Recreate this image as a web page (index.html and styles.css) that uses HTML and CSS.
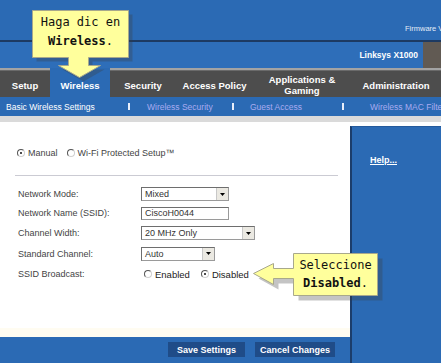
FILE: index.html
```html
<!DOCTYPE html>
<html lang="es">
<head>
  <meta charset="UTF-8" />
  <meta name="viewport" content="width=device-width, initial-scale=1.0"/>
  <title>Basic Wireless Settings - Linksys X1000</title>
  <link rel="stylesheet" href="styles.css">
</head>
<body>
  <div class="page">
    <div class="top">
      <span class="firmware">Firmware Version: 1.0.00</span>
    </div>

    <div class="model-bar">
      <div class="model">Linksys X1000</div>
      <div class="model-end"></div>
    </div>

    <nav class="tabs">
      <div class="tab">Setup</div>
      <div class="tab active">Wireless</div>
      <div class="tab">Security</div>
      <div class="tab">Access Policy</div>
      <div class="tab">Applications &amp;<br>Gaming</div>
      <div class="tab">Administration</div>
    </nav>

    <nav class="subtabs">
      <span class="sub sub-1 current">Basic Wireless Settings</span>
      <span class="sep"></span>
      <span class="sub sub-2">Wireless Security</span>
      <span class="sep"></span>
      <span class="sub sub-3">Guest Access</span>
      <span class="sep"></span>
      <span class="sub sub-4">Wireless MAC Filter</span>
    </nav>

    <div class="band"></div>

    <div class="main">
      <div class="content">
        <div class="form">
          <div class="mode-row">
            <label class="choice"><span class="radio checked"></span>Manual</label>
            <label class="choice wps"><span class="radio"></span>Wi-Fi Protected Setup™</label>
          </div>

          <div class="rule"></div>

          <div class="fields">
            <div class="label">Network Mode:</div>
            <div class="field">
              <div class="select w-88">
                <span class="value">Mixed</span>
                <span class="drop"><svg width="5" height="3" viewBox="0 0 5 3"><path d="M0 0H5L2.5 3Z" fill="#000"/></svg></span>
              </div>
            </div>

            <div class="label">Network Name (SSID):</div>
            <div class="field">
              <div class="input w-88">CiscoH0044</div>
            </div>

            <div class="label">Channel Width:</div>
            <div class="field">
              <div class="select w-114">
                <span class="value">20 MHz Only</span>
                <span class="drop"><svg width="5" height="3" viewBox="0 0 5 3"><path d="M0 0H5L2.5 3Z" fill="#000"/></svg></span>
              </div>
            </div>

            <div class="label">Standard Channel:</div>
            <div class="field">
              <div class="select w-74">
                <span class="value">Auto</span>
                <span class="drop"><svg width="5" height="3" viewBox="0 0 5 3"><path d="M0 0H5L2.5 3Z" fill="#000"/></svg></span>
              </div>
            </div>

            <div class="label">SSID Broadcast:</div>
            <div class="field broadcast">
              <label class="choice strong"><span class="radio"></span>Enabled</label>
              <label class="choice strong disabled-opt"><span class="radio checked"></span>Disabled</label>
            </div>
          </div>
        </div>

        <div class="actions">
          <button class="btn save">Save Settings</button>
          <button class="btn cancel">Cancel Changes</button>
        </div>
      </div>

      <aside class="help">
        <a href="#">Help...</a>
      </aside>
    </div>

    <!-- callouts over the page -->
    <div class="callout callout-top">
      <svg class="shape" width="104" height="74" viewBox="0 0 104 74">
        <polygon class="shadow" points="4.5,4.5 100.5,4.5 100.5,51.5 60.5,51.5 60.5,59.5 72.5,59.5 51.5,71.5 30.5,59.5 40.5,59.5 40.5,51.5 4.5,51.5"/>
        <polygon class="fill" points="0.5,0.5 96.5,0.5 96.5,47.5 56.5,47.5 56.5,55.5 68.5,55.5 47.5,67.5 26.5,55.5 36.5,55.5 36.5,47.5 0.5,47.5"/>
      </svg>
      <div class="callout-text top-text">Haga dic en<br><b>Wireless</b>.</div>
    </div>

    <div class="callout callout-right">
      <svg class="shape" width="132" height="50" viewBox="0 0 132 50">
        <polygon class="shadow" points="45.5,5.5 129.5,5.5 129.5,47.5 45.5,47.5 45.5,30.5 25.5,30.5 25.5,36.5 5.5,25.5 25.5,15.5 25.5,20.5 45.5,20.5"/>
        <polygon class="fill" points="40.5,0.5 124.5,0.5 124.5,42.5 40.5,42.5 40.5,25.5 20.5,25.5 20.5,31.5 0.5,20.5 20.5,10.5 20.5,15.5 40.5,15.5"/>
      </svg>
      <div class="callout-text right-text">Seleccione<br><b>Disabled</b>.</div>
    </div>
  </div>
</body>
</html>
```

FILE: styles.css
```css
body {
  margin: 0;
  padding: 0;
  background-color: #ffffff;
  font-family: "Liberation Sans", Arial, sans-serif;
  color: #333;
}

.page {
  position: relative;
  width: 441px;
  height: 363px;
  overflow: hidden;
}

/* header */
.top {
  height: 40px;
  background-color: #2b6ab4;
  border-bottom: 2px solid #1d3a62;
  box-sizing: content-box;
  padding-left: 405px;
  white-space: nowrap;
  overflow: hidden;
}

.firmware {
  display: block;
  padding-top: 24px;
  font-size: 7.5px;
  line-height: 10px;
  color: #e4ecf7;
}

.model-bar {
  display: flex;
  height: 26px;
}

.model {
  flex: 0 0 423px;
  background-color: #2e6eb9;
  color: #fff;
  font-size: 8.5px;
  font-weight: bold;
  text-align: right;
  padding-right: 5px;
  box-sizing: border-box;
  line-height: 26px;
}

.model-end {
  flex: 1;
  background-color: #615a53;
}

/* tabs */
.tabs {
  display: grid;
  grid-template-columns: 50px 60px 66px 77px 98px 1fr;
  height: 29px;
  background: linear-gradient(#a3a3a3 0, #a3a3a3 2px, #6a6a6a 2px, #6a6a6a 3px, #4d4d4d 3px);
}

.tab {
  display: flex;
  align-items: center;
  justify-content: center;
  padding-top: 5px;
  box-sizing: border-box;
  color: #fff;
  font-size: 9.5px;
  font-weight: bold;
  line-height: 11px;
  text-align: center;
}

.tab.active {
  background-color: #2b6ab4;
}

.subtabs {
  display: flex;
  align-items: center;
  height: 19px;
  background-color: #2b6ab4;
  white-space: nowrap;
  overflow: hidden;
}

.sub {
  font-size: 8.5px;
  color: #a9aaf0;
  box-sizing: border-box;
  flex: none;
}

.sub.current {
  color: #fff;
}

.sub-1 { width: 128px; padding-left: 6px; }
.sub-2 { width: 102px; padding-left: 17px; }
.sub-3 { width: 108px; padding-left: 16px; }
.sub-4 { padding-left: 26px; }

.sep {
  flex: none;
  width: 2px;
  height: 7px;
  background-color: #e8eefa;
}

.band {
  height: 6px;
  background-color: #dadada;
}

/* main area */
.main {
  display: grid;
  grid-template-columns: 350px 1fr;
  height: 241px;
  background-color: #fff;
}

.content {
  display: flex;
  flex-direction: column;
}

.form {
  flex: 1;
  padding-top: 24px;
  border-bottom: 9px solid #fffcf1;
}

.mode-row {
  display: flex;
  align-items: center;
  height: 14px;
  padding-left: 17px;
}

.choice {
  display: flex;
  align-items: center;
  font-size: 9px;
  color: #444;
}

.choice.wps {
  margin-left: 9px;
}

.radio {
  display: inline-block;
  position: relative;
  width: 6px;
  height: 6px;
  border-radius: 50%;
  border: 1px solid;
  border-color: #555 #d0d0d0 #d0d0d0 #555;
  background-color: #fff;
  margin-right: 3px;
}

.radio.checked::after {
  content: "";
  position: absolute;
  left: 2px;
  top: 2px;
  width: 2px;
  height: 2px;
  border-radius: 50%;
  background-color: #111;
}

.rule {
  margin: 15px 12px 0 15px;
  height: 1px;
  background-color: #cbcbd3;
}

.fields {
  display: grid;
  grid-template-columns: 123px auto;
  grid-template-rows: 18px 20px 20px 21px 20px;
  margin-top: 9px;
  padding-left: 18px;
}

.label {
  display: flex;
  align-items: center;
  font-size: 9px;
  color: #444;
}

.field {
  display: flex;
  align-items: center;
}

.select,
.input {
  display: flex;
  align-items: center;
  height: 14px;
  box-sizing: border-box;
  border: 1px solid #9a9a9a;
  border-top-color: #6e6e6e;
  border-left-color: #6e6e6e;
  background-color: #fff;
  font-size: 9px;
  color: #333;
}

.input {
  padding-left: 3px;
  height: 13px;
}

.w-88 { width: 88px; }
.w-114 { width: 114px; }
.w-74 { width: 74px; }

.value {
  flex: 1;
  padding-left: 3px;
}

.drop {
  display: flex;
  align-items: center;
  justify-content: center;
  width: 11px;
  height: 12px;
  background-color: #ebe9e2;
  border-left: 1px solid #c8c8c8;
}

.broadcast .choice {
  font-size: 9.5px;
  color: #222;
}

.broadcast .choice:first-child {
  margin-left: 3px;
}

.disabled-opt {
  margin-left: 11px;
}

.actions {
  display: flex;
  justify-content: flex-end;
  gap: 10px;
  height: 26px;
  padding: 5px 15px 0 0;
  box-sizing: border-box;
  background-color: #2b6ab4;
}

.btn {
  height: 15px;
  padding: 0;
  border: none;
  background-color: #1f4c88;
  color: #fff;
  font-family: "Liberation Sans", Arial, sans-serif;
  font-size: 9px;
  font-weight: bold;
}

.save { width: 77px; }
.cancel { width: 80px; }

.help {
  margin-top: 4px;
  background-color: #2b6ab4;
  border-left: 2px solid #1c3d6b;
  border-top: 1px solid #245a9c;
  padding: 22px 0 0 18px;
}

.help a {
  color: #fff;
  font-size: 9px;
  font-weight: bold;
}

/* callouts */
.callout {
  position: absolute;
}

.callout-top {
  left: 32px;
  top: 10px;
  width: 104px;
  height: 74px;
}

.callout-right {
  left: 253px;
  top: 253px;
  width: 132px;
  height: 50px;
}

.shape {
  position: absolute;
  left: 0;
  top: 0;
}

.shape .shadow {
  fill: rgba(60, 60, 60, 0.3);
}

.shape .fill {
  fill: #ffff9c;
  stroke: #a8a88c;
  stroke-width: 1;
}

.callout-text {
  position: relative;
  font-family: "DejaVu Sans Mono", monospace;
  font-size: 12px;
  color: #111;
  text-align: center;
}

.top-text {
  width: 97px;
  padding-top: 3px;
  line-height: 19px;
}

.right-text {
  margin-left: 40px;
  width: 85px;
  padding-top: 3px;
  line-height: 18px;
}
```
